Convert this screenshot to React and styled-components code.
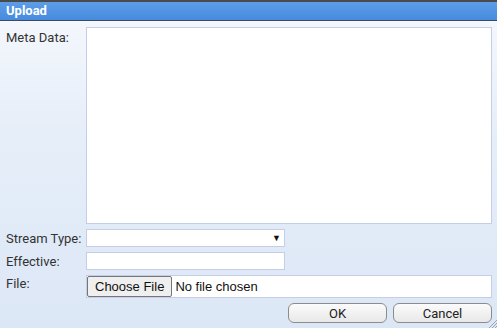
import React from "react";
import styled, { createGlobalStyle } from "styled-components";

const GlobalStyle = createGlobalStyle`
  html, body {
    margin: 0;
    padding: 0;
    background: #dce7f6;
  }
  * {
    box-sizing: border-box;
  }
`;

const App = () => {
  return (
    <>
      <GlobalStyle />
      <Dialog>
        <TitleBar>Upload</TitleBar>
        <Body>
          <Label top={3}>Meta Data:</Label>
          <MetaArea />
          <Label>Stream Type:</Label>
          <SelectBox>
            <Select>
              <option></option>
            </Select>
            <Arrow>▼</Arrow>
          </SelectBox>
          <Label>Effective:</Label>
          <TextInput type="text" />
          <Label top={1}>File:</Label>
          <FileBox>
            <HiddenFile type="file" />
            <ChooseButton>Choose File</ChooseButton>
            <FileName>No file chosen</FileName>
          </FileBox>
          <Actions>
            <DialogButton>OK</DialogButton>
            <DialogButton>Cancel</DialogButton>
          </Actions>
        </Body>
        <Grip width="9" height="9" viewBox="0 0 9 9">
          <path d="M9 1 L1 9 M9 4 L4 9 M9 7 L7 9" stroke="#9aa5b8" strokeWidth="1" />
        </Grip>
      </Dialog>
    </>
  );
};

const Dialog = styled.div`
  position: relative;
  width: 497px;
  height: 328px;
  display: flex;
  flex-direction: column;
  font-family: Roboto, "Liberation Sans", Arial, sans-serif;
  font-size: 13px;
  color: #222;
  background: linear-gradient(to bottom, #f6f9fd 0%, #e6eef9 40%, #dce7f6 100%);
`;

const TitleBar = styled.div`
  height: 21px;
  border-top: 2px solid #4a4a4a;
  border-bottom: 1px solid #3a4a60;
  background: linear-gradient(to bottom, #5d9de8, #478bdf);
  color: #fff;
  font-weight: bold;
  font-size: 13px;
  line-height: 18px;
  padding-left: 6px;
`;

const Body = styled.div`
  display: grid;
  grid-template-columns: 80px 199px 1fr;
  grid-template-rows: 197px 18px 18px 23px 20px;
  row-gap: 5px;
  padding: 6px 5px 0 6px;
`;

const Label = styled.div`
  grid-column: 1;
  display: flex;
  align-items: ${({ top }) => (top ? "flex-start" : "center")};
  padding-top: ${({ top }) => (top ? `${top}px` : "0")};
  color: #333;
`;

const MetaArea = styled.textarea`
  grid-column: 2 / 4;
  resize: none;
  border: 1px solid #c5cee6;
  background: #fff;
  margin: 0;
  outline: none;
`;

const SelectBox = styled.div`
  grid-column: 2;
  display: flex;
  align-items: center;
  border: 1px solid #c5cee6;
  background: #fff;
  padding-right: 3px;
`;

const Select = styled.select`
  flex: 1;
  appearance: none;
  border: none;
  background: transparent;
  height: 100%;
  outline: none;
`;

const Arrow = styled.span`
  font-size: 9px;
  color: #111;
  line-height: 1;
`;

const TextInput = styled.input`
  grid-column: 2;
  border: 1px solid #c5cee6;
  background: #fff;
  margin: 0;
  outline: none;
`;

const FileBox = styled.label`
  grid-column: 2 / 4;
  display: flex;
  align-items: center;
  gap: 3px;
  border: 1px solid #c5cee6;
  background: #fff;
  font-family: "Liberation Sans", Arial, sans-serif;
  font-size: 13px;
  color: #111;
`;

const HiddenFile = styled.input`
  display: none;
`;

const ChooseButton = styled.span`
  height: 21px;
  display: flex;
  align-items: center;
  padding: 0 7px;
  border: 1px solid #767676;
  border-radius: 2px;
  background: #efefef;
`;

const FileName = styled.span`
  white-space: nowrap;
`;

const Actions = styled.div`
  grid-column: 1 / 4;
  display: flex;
  justify-content: flex-end;
  gap: 6px;
`;

const DialogButton = styled.button`
  width: 99px;
  height: 20px;
  border: 1px solid #8c8c8c;
  border-radius: 6px;
  background: linear-gradient(to bottom, #fbfbfb, #e8e8e8);
  font-family: Roboto, "Liberation Sans", Arial, sans-serif;
  font-size: 13px;
  color: #222;
  padding: 0;
`;

const Grip = styled.svg`
  position: absolute;
  right: 0;
  bottom: 0;
`;

export default App;
